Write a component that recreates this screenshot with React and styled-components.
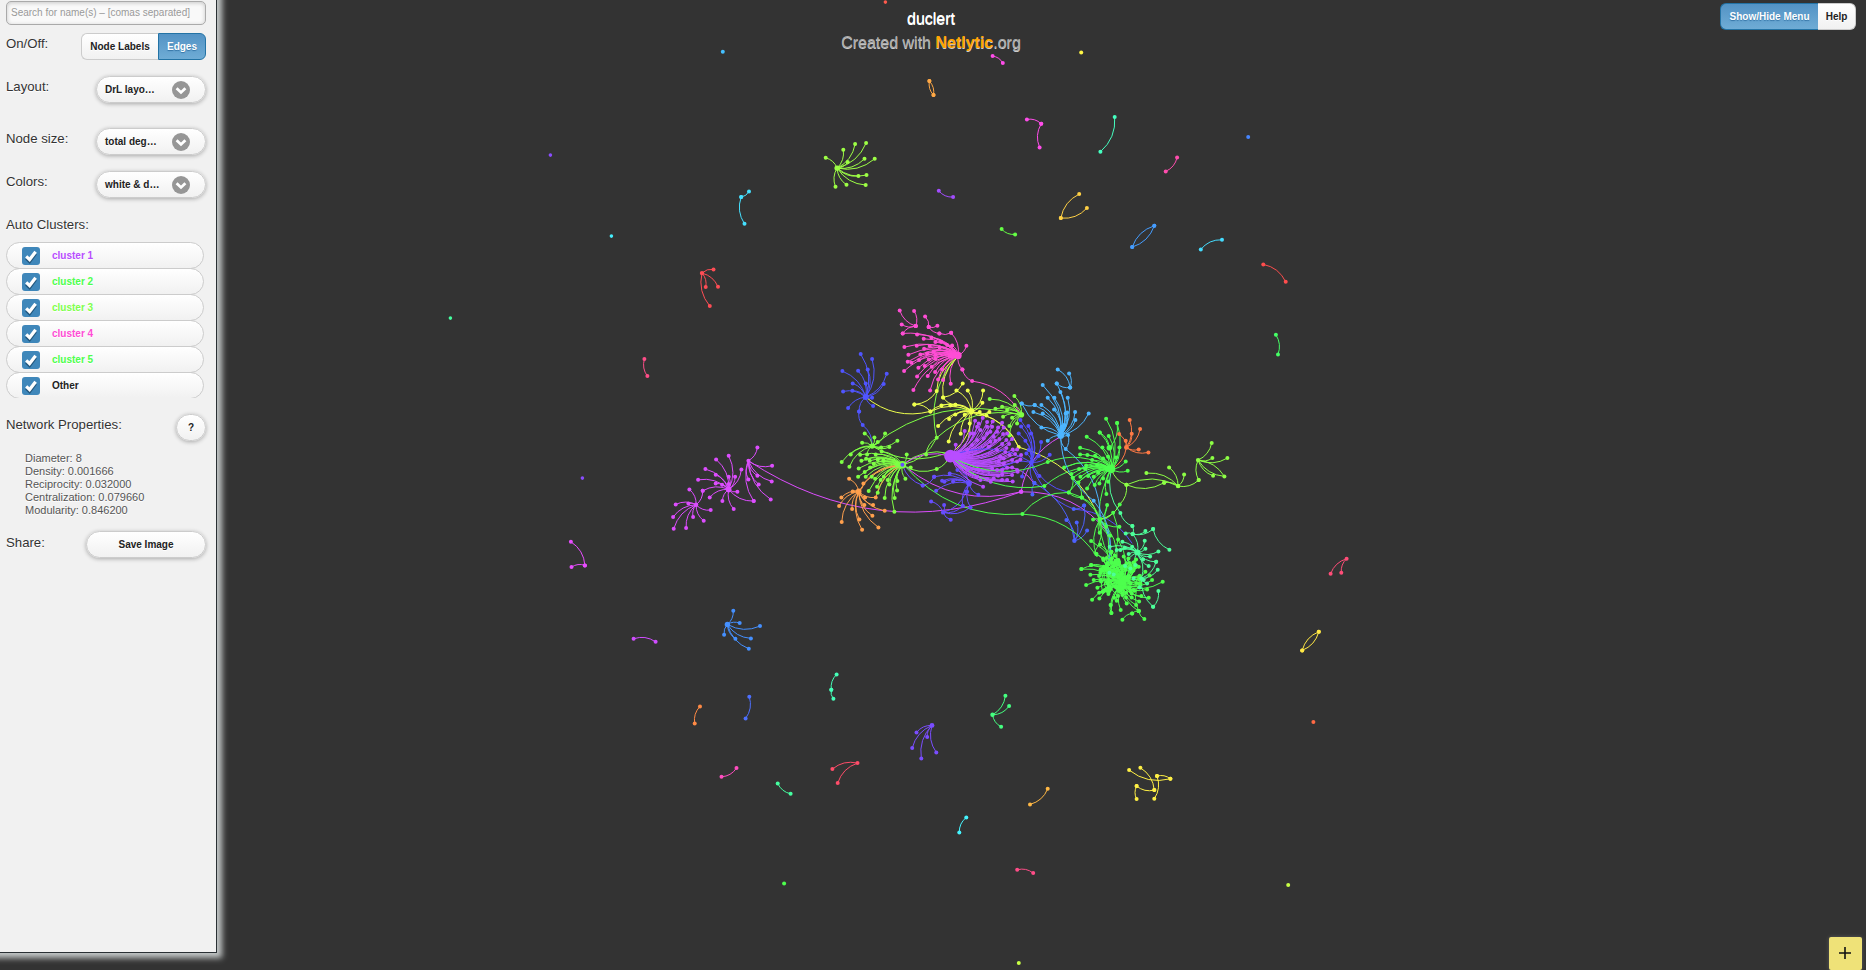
import React from 'react';
import styled, { createGlobalStyle } from 'styled-components';

const Global = createGlobalStyle`
  html, body { margin: 0; padding: 0; background: #333; overflow: hidden; }
  * { box-sizing: border-box; }
  body { font-family: "Liberation Sans", Arial, Helvetica, sans-serif; }
`;

const Page = styled.main`
  position: relative;
  display: flex;
  justify-content: space-between;
  align-items: flex-start;
  width: 1866px;
  height: 970px;
  background: #333;
  overflow: hidden;
`;

const Canvas = styled.svg`
  position: absolute;
  inset: 0;
  width: 1866px;
  height: 970px;
`;

const Sidebar = styled.aside`
  position: relative;
  width: 227px;
  height: 963px;
  margin: -10px 0 0 -10px;
  padding: 10px 10px 0 16px;
  background: #f1f1f1;
  border-right: 1px solid #2a3034;
  border-bottom: 1px solid #2a3034;
  box-shadow: 4px 4px 6px 1px #c4c8c8;
  color: #333;
  text-shadow: 0 1px 0 #fff;
`;

const Search = styled.input`
  display: block;
  width: 200px;
  height: 24px;
  margin-top: 1px;
  padding: 0 4px 2px;
  border: 1px solid #aaa;
  border-radius: 5px;
  background: #f9f9f9;
  box-shadow: inset 0 1px 4px rgba(0, 0, 0, 0.2);
  font: 10px/20px "Liberation Sans", Arial, sans-serif;
  &::placeholder { color: #999; opacity: 1; }
`;

const Row = styled.div`
  display: flex;
  justify-content: space-between;
  align-items: flex-start;
  height: 27px;
  margin-top: ${(p) => p.$gap}px;
`;

const Label = styled.span`
  font-size: 13.2px;
  line-height: ${(p) => p.$line || 21}px;
  white-space: nowrap;
`;

const Group = styled.div`
  display: flex;
  height: 27px;
`;

const Segment = styled.button`
  height: 27px;
  padding: 0;
  width: ${(p) => p.$w}px;
  border: 1px solid ${(p) => (p.$on ? '#2373a5' : '#ccc')};
  ${(p) => (p.$side === 'left' ? 'border-right: 0; border-radius: 6px 0 0 6px;' : 'border-left-width: ' + (p.$on ? 1 : 0) + 'px; border-radius: 0 6px 6px 0;')}
  background: ${(p) => (p.$on ? 'linear-gradient(#5393c5, #6facd5)' : 'linear-gradient(#fff, #f1f1f1)')};
  color: ${(p) => (p.$on ? '#fff' : '#222')};
  text-shadow: ${(p) => (p.$on ? '0 1px 1px #3373a5' : '0 1px 0 #fff')};
  font: bold 10px/25px "Liberation Sans", Arial, sans-serif;
`;

const Pill = styled.button`
  display: flex;
  align-items: center;
  justify-content: ${(p) => (p.$select ? 'space-between' : 'center')};
  width: ${(p) => p.$w}px;
  height: 27px;
  padding: ${(p) => (p.$select ? '0 15px 0 8px' : '0')};
  border: 1px solid #ccc;
  border-radius: 14px;
  background: linear-gradient(#fff, #f1f1f1);
  box-shadow: 0 1px 4px rgba(0, 0, 0, 0.3);
  color: #222;
  text-shadow: 0 1px 0 #fff;
  font: bold 10px/25px "Liberation Sans", Arial, sans-serif;
`;

const Heading = styled.div`
  margin-top: 16px;
  height: 21px;
  font-size: 13.2px;
  line-height: 21px;
`;

const ClusterList = styled.div`
  display: flex;
  flex-direction: column;
  margin-top: 7px;
  width: 198px;
  height: 156px;
  overflow: hidden;
`;

const Cluster = styled.label`
  display: flex;
  align-items: center;
  flex: none;
  gap: 12px;
  height: 27px;
  margin-bottom: -1px;
  padding-left: 15px;
  border: 1px solid #ccc;
  border-radius: 13.5px;
  background: linear-gradient(#fff, #f1f1f1);
  color: ${(p) => p.$color};
  font-size: 10px;
  font-weight: bold;
`;

const Check = styled.span`
  display: flex;
  width: 18px;
  height: 18px;
  border-radius: 3px;
  background: #3f87ba;
`;

const Stats = styled.div`
  margin: 11px 0 0 19px;
  font-size: 11px;
  line-height: 13px;
  color: #555;
`;

const Title = styled.header`
  position: absolute;
  top: 10px;
  left: 50%;
  width: 240px;
  margin-left: -122px;
  text-align: center;
  font-size: 16px;
  line-height: 18px;
  color: #fff;
  text-shadow: 0 1px 0 #fff;
`;

const Credit = styled.div`
  margin-top: 6px;
  color: #aaa;
  text-shadow: 0 1px 0 #ccc;
  b { color: orange; }
`;

const TopButtons = styled.nav`
  position: relative;
  display: flex;
  margin: 3px 10px 0 0;
`;

const Zoomer = styled.button`
  position: absolute;
  right: 4px;
  bottom: 0;
  display: grid;
  place-items: center;
  width: 33px;
  height: 33px;
  padding: 0 1px 1px 0;
  border: 0;
  border-radius: 2px;
  background: #efe278;
  box-shadow: 0 0 4px rgba(255, 255, 255, 0.2);
`;

/* ---- network data -------------------------------------------------- */

const nodes = [];
const edges = [];

// A region has its own origin and units; add() converts to canvas pixels.
const region = (ox, oy, sx, sy) => {
  const pt = ([x, y]) => [ox + x / sx, oy + y / sy];
  const read = (s) => s.trim().split(/\s+/).map((t) => {
    const back = t[0] === '~';
    return { back, p: t.replace('~', '').split(',').map(Number) };
  });
  const node = (c, p, r = 2) => nodes.push({ c, p: pt(p), r });
  const link = (c, a, b) => edges.push({ c, a: pt(a), b: pt(b) });
  return {
    star(c, hub, r, list) {
      read(list).forEach(({ back, p }) => {
        node(c, p);
        if (back) link(c, hub, p); else link(c, p, hub);
      });
      node(c, hub, r);
    },
    path(c, ...pairs) {
      pairs.forEach((s) => {
        const [a, b] = read(s);
        link(c, a.p, b.p);
        node(c, a.p);
        node(c, b.p);
      });
    },
    lines(c, ...pairs) {
      pairs.forEach((s) => {
        const [a, b] = read(s);
        link(c, a.p, b.p);
      });
    },
    dots(c, list, r) { read(list).forEach(({ p }) => node(c, p, r)); },
  };
};

const north = region(660, 40, 2.45, 3);
north.star('#9dff45', [433, 384], 2.7, '405,353 448,329 477,312 504,309 459,366 500,356 525,356 485,408 505,405 456,434 503,435 429,440');
north.path('#45e0ff', '217,454 198,471', '206,551 198,471');
north.star('#ff4d55', [102, 699], 2.2, '~130,688 ~141,740 ~111,741 121,798');
north.path('#ffa845', '659,123 669,165', '669,165 659,123');
north.path('#ff4dea', '814,48 839,69', '898,238 933,251', '929,322 933,251');
north.path('#45ffc0', '1113,231 1078,335');
north.path('#ff4dae', '1266,352 1238,394');
north.path('#a34dff', '717,471 682,452');
north.path('#65ff45', '869,583 836,567');
north.path('#ffd045', '981,534 1026,462', '1045,504 981,534');
north.path('#459dff', '1210,557 1156,621', '1156,621 1210,557');
north.path('#45dcff', '1324,628 1376,599');
north.path('#ff4d4d', '1477,673 1532,725');
north.path('#45ff65', '1508,884 1513,943');
north.dots('#4585ff', '1440,291');
north.dots('#45c0ff', '153,35');
north.dots('#fff745', '1031,37');

const map = region(0, 0, 1, 1);
map.dots('#8a4dff', '550,155 582,478', 1.8);
map.dots('#45f0ff', '611,236', 1.8);
map.dots('#45ffa0', '450,318', 1.8);
map.dots('#ff5a4d', '885,2', 1.8);
map.path('#ff4d88', '647,376 644,359');

const south = region(540, 530, 1.8667, 3);
south.path('#e84dff', '57,35 83,106', '58,111 83,106');
south.star('#4590ff', [349, 283], 2.7, '360,242 ~372,279 410,288 343,314 364,326 393,325 389,356');
south.path('#d04dff', '174,326 215,335');
south.path('#45ffb8', '543,479 553,433', '547,506 543,479');
south.path('#ff8a45', '288,580 298,529');
south.path('#4d70ff', '390,500 383,565');
south.star('#45ff80', [844, 554], 2.2, '868,497 875,528 860,590');
south.star('#7a4dff', [731, 586], 2.4, '702,607 694,654 722,621 711,685 739,667');
south.star('#ff4d6a', [592, 699], 2, '545,717 555,759');
south.path('#ff4dc0', '366,714 338,740');
south.path('#45ffa0', '467,791 443,760');
south.path('#ffb845', '947,776 914,823');
south.path('#45f5ff', '782,907 795,862');
south.path('#ff4d88', '890,1019 920,1029');
south.path('#fff045', '1176,746 1099,720', '1151,738 1176,746', '1151,738 1146,806', '1120,713 1146,780', '1146,780 1113,768', '1113,807 1113,768');
south.path('#ffe845', '1453,305 1422,361', '1422,361 1453,305');
south.star('#ff4d78', [1505, 86], 2, '1475,131 1495,128');
south.dots('#4dff4d', '455,1060');
south.dots('#c8ff45', '1396,1065 893,1299');
south.dots('#ff6a45', '1443,576');

const west = region(660, 430, 3, 3);
const MAG = '#dd4dff';
west.star(MAG, [264, 92], 2, '291,52 335,107 291,137 334,154 295,163 331,208 264,148 280,213');
west.star(MAG, [205, 178], 2.8, '205,77 167,88 135,117 113,149 166,134 205,140 224,140 166,160 185,164 148,202 186,213 220,237 231,185 243,118 127,182 280,213 205,162');
west.star(MAG, [107, 224], 2.2, '87,178 46,223 84,220 38,261 40,296 77,294 98,261 130,272 151,240 127,182');
west.lines(MAG, '1082,185 264,92');

const core = region(820, 290, 3, 3);
const PINK = '#ff4dd5';
core.star(PINK, [413, 196], 3.6, '247,130 290,133 310,146 333,142 345,156 252,171 289,167 311,176 328,168 264,194 300,193 262,215 273,218 296,210 251,243 294,233 313,228 334,230 290,259 322,258 344,246 279,300 353,268 365,238 368,270 391,281 329,301 395,166 426,238 438,167 340,184 362,155 358,172 325,208 345,206 320,190 345,195 392,128 380,165');
core.dots(PINK, '402,195 390,196', 3);
core.path(PINK, '286,108 238,61', '281,63 286,108', '286,108 244,103', '247,130 286,108', '314,79 325,111', '351,107 325,111', '357,130 325,111', '392,128 357,130', '455,273 426,238');
core.lines(PINK, '455,273 602,374');

core.star('#5055ff', [136, 321], 3, '121,192 155,207 66,243 113,242 142,238 199,251 190,282 97,280 136,280 68,304 96,302 83,354 158,348 116,364 155,323');
core.path('#5055ff', '127,405 116,364');
core.lines('#5055ff', '127,405 155,468');

const LIME = '#7fff45';
core.star(LIME, [603, 374], 2.8, '508,327 582,318 525,356 548,380 583,345 560,360 575,383 567,408 567,436 590,400 545,350');
core.lines(LIME, '155,468 603,374', '349,443 603,374', '349,443 405,205', '388,485 155,468', '349,443 246,524', '349,537 246,524', '390,490 349,537', '246,524 388,490', '317,493 349,443');
core.dots(LIME, '349,443 317,493 349,537');
core.star(LIME, [155, 468], 2.6, '133,430 194,430 162,442 125,458 172,456 231,452 207,471 182,472 91,493 64,516 87,530 140,493');
core.star(LIME, [246, 524], 3.8, '133,546 113,560 115,535 123,512 137,506 148,512 166,493 184,484 119,494 172,508 189,511 160,521 149,532 136,560 154,560 145,603 164,566 181,570 170,590 172,608 190,560 202,570 207,583 230,601 193,624 223,624 222,665 231,573 255,566 259,493 271,532');
core.dots(LIME, '232,524', 3);

const ORG = '#ffa04d';
core.star(ORG, [115, 604], 2.8, '86,566 129,580 63,622 97,604 134,622 166,622 56,648 95,657 132,645 158,645 193,662 156,677 117,688 174,712 64,696 125,719');
core.lines(ORG, '129,580 246,526', '115,604 235,526', '166,622 246,524');
core.lines(MAG, '602,605 255,530', '246,524 390,498', '602,605 720,440', '602,605 865,730', '555,530 640,578');
core.dots(MAG, '602,605', 2.3);

const INDIGO = '#664dff';
core.star(INDIGO, [446, 580], 2.8, '341,560 365,572 388,550 411,540 347,602 372,575 398,574 474,614 440,605 450,652 427,648 390,510');
core.star(INDIGO, [368, 667], 2.2, '332,634 371,645 391,689 437,605 427,648 450,652');
core.path(INDIGO, '307,586 246,524', '341,560 307,586');

const YEL = '#eeff4d';
core.star(YEL, [453, 364], 2.8, '330,364 363,346 390,346 405,344 408,301 442,301 488,301 486,338 386,387 405,373 433,374 353,408 421,431 448,400 478,366 507,366 498,376 385,454');
core.path(YEL, '349,303 282,343', '427,280 368,322', '282,343 330,364', '405,344 368,322');
core.lines(YEL, '330,364 136,321', '349,303 400,210', '368,322 408,205', '453,364 595,471', '480,372 595,471', '453,364 404,480', '595,471 838,688', '448,400 415,490', '330,364 405,344');
core.dots(YEL, '595,471');

const PUR = '#b84dff';
core.star(PUR, [390, 498], 6.3, '406,464 433,423 450,430 464,392 487,384 500,396 515,410 517,394 545,398 533,412 550,412 530,425 548,432 560,430 558,450 545,462 566,462 575,447 558,474 577,478 590,478 602,495 584,492 575,510 590,514 575,532 590,540 560,533 592,545 575,555 560,570 545,553 533,557 520,565 511,575 488,590 480,570 470,560 500,567 530,540 577,574 545,570 520,440 500,430 480,420 470,410 460,430 510,455 530,480 540,500 535,515 500,410 490,445 550,520 545,540 515,535 475,540 525,452 505,470 568,495 555,486 470,450 600,508 440,480 455,465 440,540 550,505 475,400 510,425 537,447');
core.dots(PUR, '402,496 410,498', 4.5);

const east = region(1000, 350, 3, 3);
const GRN = '#4dff4d';
const BLU = '#554dff';
east.star(BLU, [93, 337], 2.4, '62,229 84,228 55,250 92,250 122,276 75,272 85,300 115,318 148,314 65,379 117,378 102,399 78,310 60,210');
east.lines(BLU, '220,477 93,337', '220,477 395,580', '0,357 93,337', '205,427 93,337', '-150,318 93,337');
east.star('#4d62ff', [222, 572], 2.2, '251,466 198,510 229,517 260,541 102,399');
east.path('#4d62ff', '96,433 102,399', '251,466 220,477');

east.lines(GRN, '142,336 -150,318', '142,336 333,357', '132,408 -150,318', '132,408 333,357', '66,492 -290,344', '66,492 205,427', '66,492 290,620', '205,427 333,357', '191,352 333,357', '217,383 205,427', '298,508 320,620', '290,620 298,508', '338,488 330,640', '325,620 333,357', '298,508 280,610', '329,557 320,465', '298,508 350,640', '205,427 298,508');
east.star(GRN, [333, 357], 4, '317,206 350,219 298,247 325,258 259,260 239,293 357,292 306,292 239,313 261,315 284,317 308,325 323,320 347,322 376,334 382,362 236,357 213,372 217,383 257,346 254,357 240,380 234,397 263,378 260,415 283,405 297,400 280,380 318,432 323,395 308,385 293,368 275,330 290,345 191,352');
east.dots(GRN, '142,336 132,408 66,492 205,427');
east.dots(GRN, '327,293 321,356', 2.8);
east.path(GRN, '350,219 327,293', '244,442 205,427', '217,383 244,442', '298,247 327,293');
east.star(GRN, [298, 508], 2.4, '278,508 320,465 338,488 317,530 357,530 298,548 329,557 358,463 244,442');

const LEAF = '#8dff45';
east.lines(LEAF, '378,404 333,357', '378,404 358,463', '358,463 298,508');
east.star(LEAF, [533, 408], 2.2, '378,404 438,369 491,398 506,352 551,373');
east.path(LEAF, '595,390 533,408', '491,398 378,404');
east.star(LEAF, [593, 330], 2.2, '634,279 636,324 681,324 638,377 672,379 595,390');
east.lines(LEAF, '593,330 672,379');

east.star('#ff7a45', [378, 292], 2.4, '388,210 419,237 394,251 356,252 376,272 415,298 444,307');
east.lines('#ff7a45', '378,292 333,357');

const SKY = '#4db5ff';
east.star(SKY, [181, 256], 3.4, '169,100 180,126 127,105 142,143 162,143 202,143 103,165 123,165 ~64,160 99,186 127,190 161,178 200,187 224,186 225,210 265,190 123,232 142,272 196,297 185,235 203,255 192,225 196,190');
east.dots(SKY, '183,243 185,232', 2.6);
east.path(SKY, '172,58 209,112', '206,70 209,112', '209,112 169,100', '280,452 181,256', '103,165 64,160');
east.lines(SKY, '203,255 196,297', '196,297 300,508', '280,452 322,640', '300,508 325,640');

// Dense ball of replies around two neighbouring hubs.
const ring = '243,657 257,705 270,674 272,645 291,713 275,749 297,745 296,728 288,612 272,573 299,583 308,625 333,605 341,743 331,765 333,789 361,780 349,752 366,735 379,760 394,742 416,754 423,738 445,743 440,718 487,695 455,690 448,676 407,765 420,700 435,665 377,728 280,690 300,690 310,650 300,668 353,568 384,625 407,628 340,640 415,783';
east.star(GRN, [365, 705], 4, ring);
east.path(GRN, '366,809 395,790', '395,790 415,783', '432,807 415,783', '333,789 331,765', '415,783 416,700');
let seed = 7;
const rnd = () => { seed = (seed * 16807) % 2147483647; return seed / 2147483647; };
const cloud = Array.from({ length: 82 }, () => {
  const a = rnd() * Math.PI * 2;
  const d = Math.sqrt(rnd());
  return [352 + Math.cos(a) * d * 68, 680 + Math.sin(a) * d * 68].map(Math.round);
});
east.star(GRN, [365, 695], 4, cloud.slice(0, 52).map(String).join(' '));
east.star(GRN, [318, 655], 3, cloud.slice(52).map(String).join(' ') + ' 243,657 272,645 288,612 333,605 378,640 415,650');
east.dots(GRN, '375,685 360,715', 3.2);

const TEAL = '#4dff9a';
east.star(TEAL, [411, 607], 3, '397,552 433,572 435,596 474,604 449,619 467,635 428,628 445,648 395,590 366,575 373,593 360,600 349,600 385,612 405,645 374,648 328,590');
east.star(TEAL, [397, 552], 2.2, '376,550 435,543 458,537 396,528');
east.star(TEAL, [423, 685], 2, '472,659 430,690 418,712 458,770 440,700 467,635 411,607');
east.path(TEAL, '474,723 458,770', '507,599 458,537', '396,528 360,489');
east.lines(TEAL, '360,489 333,357');
east.dots(TEAL, '327,668 340,673 400,685 390,655');

const round = (n) => Math.round(n * 10) / 10;

// Every edge bows to the left of its direction of travel.
const curve = ([x1, y1], [x2, y2]) => {
  const cx = (x1 + x2) / 2 + (y2 - y1) / 4;
  const cy = (y1 + y2) / 2 + (x1 - x2) / 4;
  return `M${round(x1)} ${round(y1)}Q${round(cx)} ${round(cy)} ${round(x2)} ${round(y2)}`;
};

const Network = () => (
  <Canvas viewBox="-0.4 -0.1 1866 970">
    <g fill="none" strokeWidth="1">
      {edges.map((e, i) => <path key={i} d={curve(e.a, e.b)} stroke={e.c} />)}
    </g>
    {nodes.map((n, i) => <circle key={i} cx={round(n.p[0])} cy={round(n.p[1])} r={n.r} fill={n.c} />)}
  </Canvas>
);

const Arrow = () => (
  <svg width="18" height="18" viewBox="0 0 18 18">
    <circle cx="9" cy="9" r="9" fill="#969696" />
    <path d="M4.6 7.2 9 11.4l4.4-4.2" fill="none" stroke="#fff" strokeWidth="2.8" />
  </svg>
);

const Tick = () => (
  <svg width="18" height="18" viewBox="0 0 18 18">
    <path d="M4.2 10.4 7.6 13.6 13.6 5.6" transform="translate(0 1)" fill="none" stroke="#23587e" strokeWidth="3.2" />
    <path d="M4.2 9.4 7.6 12.6 13.6 4.8" fill="none" stroke="#fff" strokeWidth="3.2" />
  </svg>
);

const selects = [
  ['Layout:', 'DrL layo…', 16],
  ['Node size:', 'total deg…', 25],
  ['Colors:', 'white & d…', 16],
];

const clusters = [
  ['cluster 1', '#b84dff'],
  ['cluster 2', '#4dff4d'],
  ['cluster 3', '#7fff4d'],
  ['cluster 4', '#ff4dd5'],
  ['cluster 5', '#4dff4d'],
  ['Other', '#222'],
];

const stats = ['Diameter: 8', 'Density: 0.001666', 'Reciprocity: 0.032000', 'Centralization: 0.079660', 'Modularity: 0.846200'];

export default function App() {
  return (
    <Page>
      <Global />
      <Network />
      <Title>
        <div>duclert</div>
        <Credit>Created with <b>Netlytic</b>.org</Credit>
      </Title>
      <Sidebar>
        <Search placeholder="Search for name(s) – [comas separated]" />
        <Row $gap={8}>
          <Label>On/Off:</Label>
          <Group>
            <Segment $w={77} $side="left">Node Labels</Segment>
            <Segment $w={48} $side="right" $on>Edges</Segment>
          </Group>
        </Row>
        {selects.map(([label, value, gap]) => (
          <Row key={label} $gap={gap}>
            <Label>{label}</Label>
            <Pill $w={110} $select>{value}<Arrow /></Pill>
          </Row>
        ))}
        <Heading>Auto Clusters:</Heading>
        <ClusterList>
          {clusters.map(([name, color]) => (
            <Cluster key={name} $color={color}><Check><Tick /></Check>{name}</Cluster>
          ))}
        </ClusterList>
        <Row $gap={16}>
          <Label>Network Properties:</Label>
          <Pill $w={30}>?</Pill>
        </Row>
        <Stats>{stats.map((s) => <div key={s}>{s}</div>)}</Stats>
        <Row $gap={14}>
          <Label $line={24}>Share:</Label>
          <Pill $w={120}>Save Image</Pill>
        </Row>
      </Sidebar>
      <TopButtons>
        <Segment $w={98} $side="left" $on>Show/Hide Menu</Segment>
        <Segment $w={38} $side="right">Help</Segment>
      </TopButtons>
      <Zoomer aria-label="Zoom in">
        <svg width="12" height="12" viewBox="0 0 12 12"><path d="M6 0v12M0 6h12" stroke="#111" strokeWidth="1.6" /></svg>
      </Zoomer>
    </Page>
  );
}
